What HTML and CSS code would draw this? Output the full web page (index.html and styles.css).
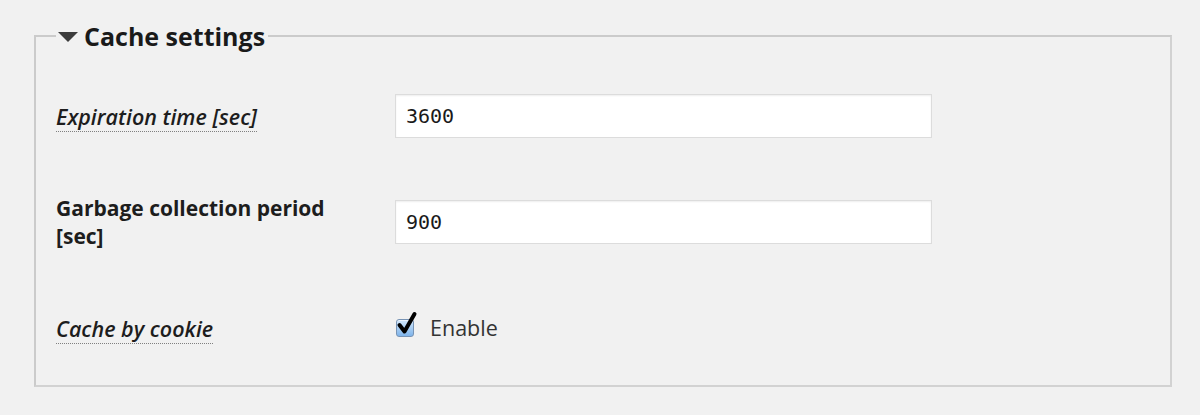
FILE: index.html
```html
<!DOCTYPE html>
<html>
<head>
<meta charset="utf-8">
<link rel="stylesheet" href="styles.css">
</head>
<body>
<div class="page">
  <fieldset class="box">
    <legend class="box-title"><span class="caret"></span>Cache settings</legend>
    <div class="rows">
      <div class="row">
        <div class="label"><span class="hint">Expiration time [sec]</span></div>
        <div class="field"><input class="text" type="text" value="3600"></div>
      </div>
      <div class="row">
        <div class="label"><span class="plain">Garbage collection period [sec]</span></div>
        <div class="field"><input class="text" type="text" value="900"></div>
      </div>
      <div class="row">
        <div class="label"><span class="hint">Cache by cookie</span></div>
        <div class="field">
          <label class="check">
            <span class="checkbox">
              <svg width="22" height="26" viewBox="0 0 22 26"><path d="M3.5 14 L8.5 20.5 L18.5 3" fill="none" stroke="#000" stroke-width="4" stroke-linecap="round" stroke-linejoin="round"/></svg>
            </span>
            <span class="check-text">Enable</span>
          </label>
        </div>
      </div>
    </div>
  </fieldset>
</div>
</body>
</html>
```
FILE: styles.css
```css
html, body {
  margin: 0;
  padding: 0;
  background: #f1f1f1;
}
body {
  font-family: "Open Sans", "Noto Sans", sans-serif;
  color: #1d1d1d;
}
.page {
  padding: 0 28px 0 34px;
}
.box {
  margin: 0;
  padding: 0 20px 0 20px;
  border: 2px solid #d2d2d2;
  border-top-color: #cbcbcb;
  border-left-color: #cbcbcb;
  min-width: 0;
  height: 368px;
  box-sizing: border-box;
  margin-top: 19px;
}
.box-title {
  padding: 0 3px 0 2px;
  font-size: 25px;
  font-weight: 700;
  line-height: 34px;
  color: #1a1a1a;
  display: flex;
  align-items: center;
}
.caret {
  width: 0;
  height: 0;
  border-left: 10px solid transparent;
  border-right: 10px solid transparent;
  border-top: 10px solid #3c3c3c;
  margin-right: 6px;
  margin-top: 2px;
}
.rows {
  display: grid;
  grid-auto-rows: 106px;
  padding-top: 10px;
}
.row {
  display: grid;
  grid-template-columns: 339px 537px;
  align-items: center;
}
.label {
  font-size: 21.5px;
  font-weight: 600;
  line-height: 27px;
  padding-right: 30px;
}
.plain {
  font-weight: 700;
  font-size: 21px;
}
.hint {
  font-style: italic;
  border-bottom: 1px dotted #808080;
}
.text {
  display: block;
  box-sizing: border-box;
  width: 537px;
  height: 44px;
  margin: 0;
  padding: 0 10px;
  border: 1px solid #dcdcdc;
  box-shadow: inset 0 1px 2px rgba(0,0,0,0.07);
  background: #fff;
  font-family: "DejaVu Sans Mono", monospace;
  font-size: 20px;
  color: #1a1a1a;
  outline: none;
}
.check {
  display: flex;
  align-items: center;
  gap: 16px;
  padding-left: 1px;
}
.checkbox {
  position: relative;
  width: 16px;
  height: 16px;
  border: 1px solid #7793b4;
  border-radius: 3px;
  background: linear-gradient(#d2e7fb, #7fb4ea);
  box-shadow: inset 0 1px 0 rgba(255,255,255,0.6);
}
.checkbox svg {
  position: absolute;
  left: -1px;
  top: -9px;
}
.check-text {
  font-size: 21.5px;
  color: #333;
  line-height: 28px;
}
```
